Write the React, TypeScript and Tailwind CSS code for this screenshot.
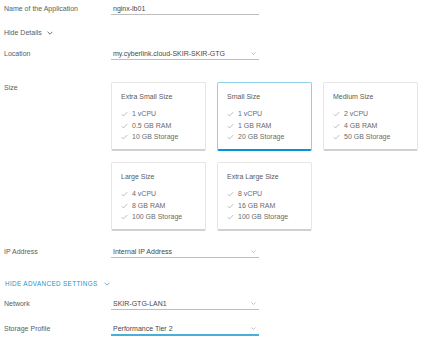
import React from "react";

const Chevron = ({ className = "" }: { className?: string }) => (
  <svg viewBox="0 0 10 6" className={className} fill="none" stroke="currentColor" strokeWidth="1.2">
    <path d="M1 1l4 4 4-4" />
  </svg>
);

const Check = () => (
  <svg viewBox="0 0 10 8" className="w-[7px] h-[6px] text-[#9a9a9a]" fill="none" stroke="currentColor" strokeWidth="0.9">
    <path d="M1 4.2l2.6 2.6L9 1.2" />
  </svg>
);

function Field({ value, dropdown = false, active = false }: { value: string; dropdown?: boolean; active?: boolean }) {
  return (
    <div
      className={`w-[148px] flex items-center justify-between pl-[2px] pr-[3px] ${
        active ? "h-[13px] border-b-2 border-[#49afd9]" : "h-[12px] border-b border-[#bdbdbd]"
      }`}
    >
      <span className="text-[#484848] leading-none">{value}</span>
      {dropdown && <Chevron className="w-[5px] h-[3px] text-[#a0a0a0]" />}
    </div>
  );
}

function Card({ title, items, selected = false }: { title: string; items: string[]; selected?: boolean }) {
  return (
    <div
      className={`w-[95px] h-[69px] bg-white rounded-[2px] pl-[9px] pt-[10px] ${
        selected
          ? "border border-[#8fd0ea] border-b-2 border-b-[#0095d3]"
          : "border border-[#e6e6e6] border-b-2 border-b-[#d0d0d0]"
      }`}
    >
      <div className="text-[#5a5a5a] leading-[8px]">{title}</div>
      <div className="mt-[9px] flex flex-col gap-[3.5px]">
        {items.map((it) => (
          <div key={it} className="flex items-center gap-[4px] leading-[8px] text-[#6a6a6a]">
            <Check />
            <span>{it}</span>
          </div>
        ))}
      </div>
    </div>
  );
}

export default function App() {
  return (
    <div
      className="w-[425px] h-[351px] bg-white pl-[4px] text-[7px] text-[#5c5c5c] overflow-hidden"
      style={{ fontFamily: '"Liberation Sans", Arial, sans-serif' }}
    >
      <div className="flex items-center mt-[3px]">
        <div className="w-[107px]">Name of the Application</div>
        <Field value="nginx-lb01" />
      </div>

      <div className="flex items-center gap-[5px] mt-[13px] h-[10px]">
        <span>Hide Details</span>
        <Chevron className="w-[6px] h-[4px] text-[#333]" />
      </div>

      <div className="flex items-center mt-[10px]">
        <div className="w-[107px]">Location</div>
        <Field value="my.cyberlink.cloud-SKIR-SKIR-GTG" dropdown />
      </div>

      <div className="flex mt-[22px]">
        <div className="w-[107px] leading-[10px] pt-[1px]">Size</div>
        <div className="grid grid-cols-[95px_95px_95px] gap-x-[11px] gap-y-[11px]">
          <Card title="Extra Small Size" items={["1 vCPU", "0.5 GB RAM", "10 GB Storage"]} />
          <Card title="Small Size" items={["1 vCPU", "1 GB RAM", "20 GB Storage"]} selected />
          <Card title="Medium Size" items={["2 vCPU", "4 GB RAM", "50 GB Storage"]} />
          <Card title="Large Size" items={["4 vCPU", "8 GB RAM", "100 GB Storage"]} />
          <Card title="Extra Large Size" items={["8 vCPU", "16 GB RAM", "100 GB Storage"]} />
        </div>
      </div>

      <div className="flex items-center mt-[15px]">
        <div className="w-[107px]">IP Address</div>
        <Field value="Internal IP Address" dropdown />
      </div>

      <div className="flex items-center gap-[6px] mt-[21px] h-[10px] pl-[1px]">
        <span className="text-[#1a94cf] text-[6.3px] tracking-[0.06em] font-medium">HIDE ADVANCED SETTINGS</span>
        <Chevron className="w-[6px] h-[4px] text-[#1a94cf]" />
      </div>

      <div className="flex items-center mt-[9px]">
        <div className="w-[107px]">Network</div>
        <Field value="SKIR-GTG-LAN1" dropdown />
      </div>

      <div className="flex items-center mt-[13px]">
        <div className="w-[107px]">Storage Profile</div>
        <Field value="Performance Tier 2" dropdown active />
      </div>
    </div>
  );
}
